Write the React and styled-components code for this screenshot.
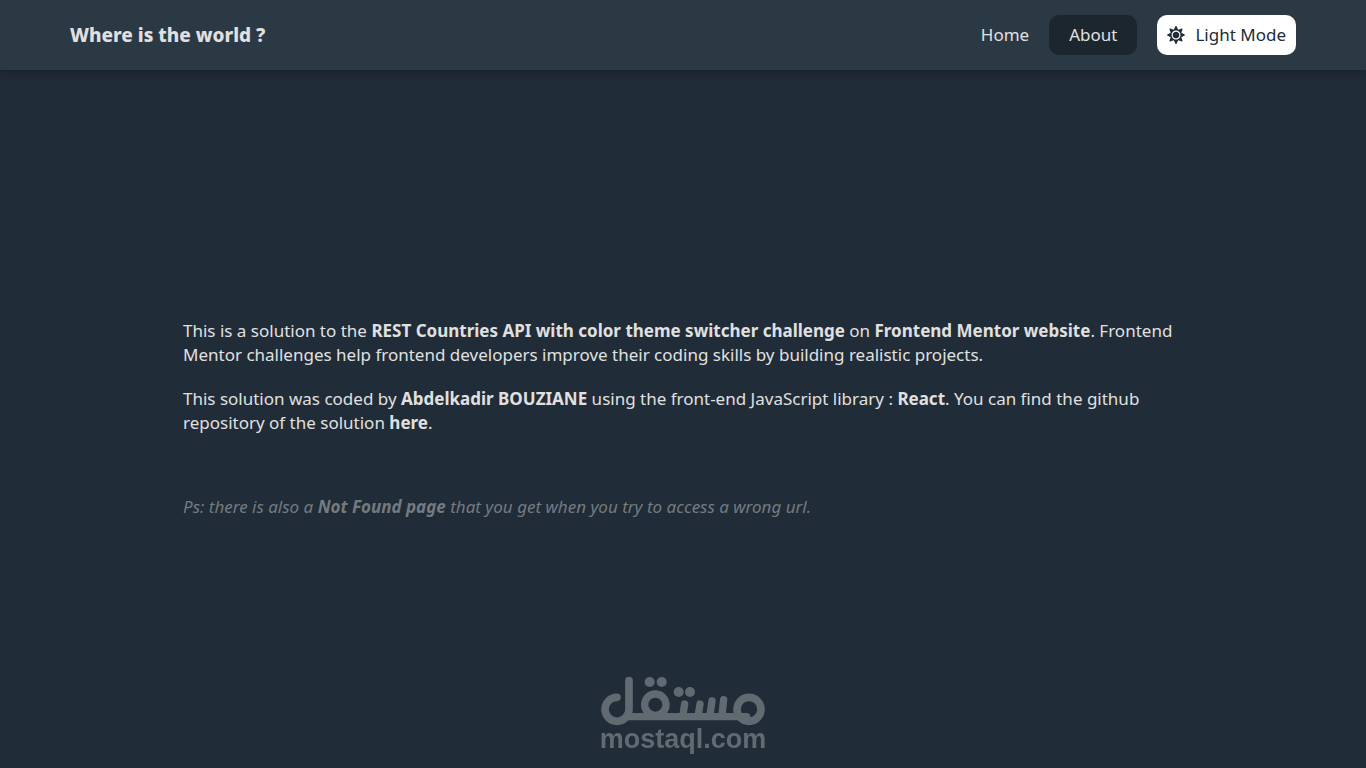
import React from 'react';
import styled, { createGlobalStyle } from 'styled-components';
import { FaSun } from 'react-icons/fa';

const BG = '#202c37';
const HEADER_BG = '#2b3945';
const TEXT = '#e0e0e0';
const MUTED = '#747b80';
const WATERMARK = '#616a71';

const GlobalStyle = createGlobalStyle`
    * {
        box-sizing: border-box;
    }
    body {
        margin: 0;
        background: ${BG};
        color: ${TEXT};
        font-family: 'Noto Sans', sans-serif;
        font-size: 17px;
        line-height: 24px;
    }
`;

const Page = styled.div`
    display: flex;
    flex-direction: column;
    min-height: 100vh;
`;

const Header = styled.header`
    display: flex;
    align-items: center;
    justify-content: space-between;
    height: 70px;
    padding: 0 70px;
    background: ${HEADER_BG};
    box-shadow: 0 2px 10px rgba(0, 0, 0, 0.3);
`;

const Title = styled.h1`
    margin: 0;
    font-size: 19px;
    font-weight: 800;
`;

const Nav = styled.nav`
    display: flex;
    align-items: center;
    gap: 20px;
`;

const NavLink = styled.a`
    padding: ${props => props.$active ? '8px 20px' : '8px 0'};
    border-radius: 10px;
    background: ${props => props.$active ? '#1c262f' : 'transparent'};
    color: inherit;
    text-decoration: none;
`;

const ModeButton = styled.button`
    display: flex;
    align-items: center;
    gap: 10px;
    padding: 8px 10px;
    border: none;
    border-radius: 10px;
    background: #fff;
    color: ${BG};
    font: inherit;
    cursor: pointer;
`;

const Main = styled.main`
    display: flex;
    flex: 1;
    flex-direction: column;
    justify-content: center;
    gap: 20px;
    width: 100%;
    max-width: 1000px;
    margin: 0 auto;
`;

const Paragraph = styled.p`
    margin: 0;
`;

const Note = styled(Paragraph)`
    padding-top: 40px;
    color: ${MUTED};
    font-style: italic;
`;

const TextLink = styled.a`
    color: inherit;
    font-weight: bold;
    text-decoration: none;
`;

// stays on top of the page content
const Watermark = styled.div`
    position: fixed;
    right: 0;
    bottom: 16px;
    left: 0;
    display: flex;
    flex-direction: column;
    align-items: center;
    color: ${WATERMARK};
    font: bold 27px/26px 'Liberation Sans', sans-serif;
    pointer-events: none;
`;

const Logo = () => (
    <svg width='166' height='50' viewBox='0 0 498 150' fill='none' stroke='currentColor' strokeWidth='22' strokeLinecap='round'>
        <path d='M51 64A36 36 0 1 0 87 100V14' strokeWidth='23' />
        <path d='M80 122H440' />
        <circle cx='166' cy='86' r='32' />
        <path d='M254 84L249 116M300 84L295 116M336 75L330 116M371 71L366 116' />
        <circle cx='447' cy='100' r='36' strokeWidth='23' />
        <g fill='currentColor' stroke='none'>
            <circle cx='149' cy='18' r='15' />
            <circle cx='185' cy='18' r='15' />
            <circle cx='236' cy='48' r='15' />
            <circle cx='270' cy='48' r='15' />
        </g>
    </svg>
);

export default function App () {
    return (
        <Page>
            <GlobalStyle />
            <Header>
                <Title>Where is the world ?</Title>
                <Nav>
                    <NavLink href='#home'>Home</NavLink>
                    <NavLink href='#about' $active>About</NavLink>
                    <ModeButton type='button'>
                        <FaSun size={18} />
                        Light Mode
                    </ModeButton>
                </Nav>
            </Header>
            <Main>
                <Paragraph>
                    This is a solution to the <TextLink href='#challenge'>REST Countries API with color theme switcher challenge</TextLink> on <TextLink href='#mentor'>Frontend Mentor website</TextLink>.
                    {' '}Frontend Mentor challenges help frontend developers improve their coding skills by building realistic projects.
                </Paragraph>
                <Paragraph>
                    This solution was coded by <TextLink href='#author'>Abdelkadir BOUZIANE</TextLink> using the front-end JavaScript library : <TextLink href='#react'>React</TextLink>.
                    {' '}You can find the github repository of the solution <TextLink href='#repository'>here</TextLink>.
                </Paragraph>
                <Note>
                    Ps: there is also a <TextLink href='#not-found'>Not Found page</TextLink> that you get when you try to access a wrong url.
                </Note>
            </Main>
            <Watermark>
                <Logo />
                <span>mostaql.com</span>
            </Watermark>
        </Page>
    );
}
